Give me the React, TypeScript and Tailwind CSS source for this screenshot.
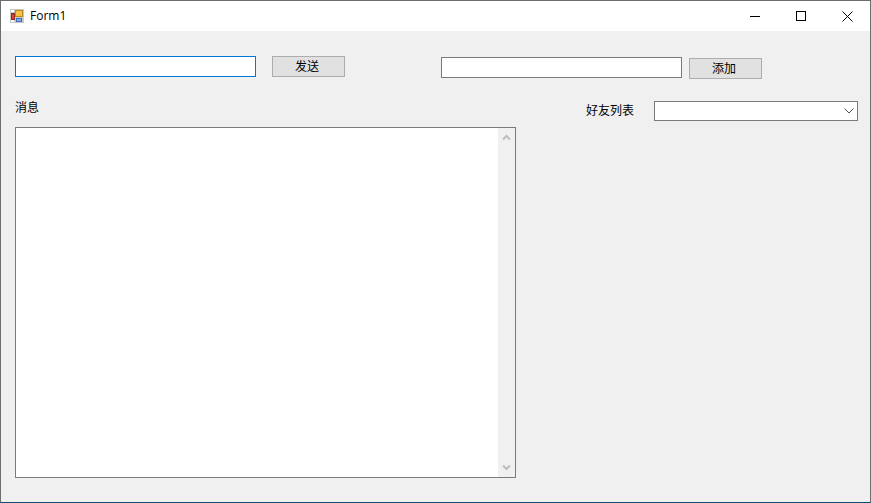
const cjk = "font-['Microsoft_YaHei','Noto_Sans_CJK_SC',sans-serif]";

function AppIcon() {
  return (
    <svg width="14" height="14" viewBox="0 0 14 14" shapeRendering="crispEdges">
      <rect x="0" y="0" width="14" height="14" fill="#c8c8c8" />
      <rect x="1" y="1" width="3" height="2" fill="#fff" />
      <rect x="1" y="11" width="3" height="2" fill="#fff" />
      <rect x="1" y="4" width="4" height="7" fill="#8e2a20" />
      <rect x="2" y="5" width="2" height="5" fill="#d9442f" />
      <rect x="5" y="1" width="8" height="7" fill="#b98a1e" />
      <rect x="6" y="2" width="6" height="5" fill="#f6c244" />
      <rect x="6" y="9" width="6" height="4" fill="#3f70bd" />
      <rect x="7" y="10" width="4" height="2" fill="#7fb0ee" />
    </svg>
  );
}

function TitleBar() {
  return (
    <div className="flex h-[30px] items-center bg-white pl-[9px]">
      <AppIcon />
      <span className="ml-[6px] font-['Open_Sans',sans-serif] text-[12px] text-black">Form1</span>
      <div className="ml-auto flex h-full items-center">
        <div className="flex w-[46px] justify-center">
          <svg width="10" height="10" viewBox="0 0 10 10" shapeRendering="crispEdges">
            <path d="M0 5.5h10" stroke="#000" fill="none" />
          </svg>
        </div>
        <div className="flex w-[46px] justify-center">
          <svg width="10" height="10" viewBox="0 0 10 10" shapeRendering="crispEdges">
            <rect x="0.5" y="0.5" width="9" height="9" stroke="#000" fill="none" />
          </svg>
        </div>
        <div className="flex w-[46px] justify-center">
          <svg width="11" height="11" viewBox="0 0 11 11">
            <path d="M0.5 0.5l10 10M10.5 0.5l-10 10" stroke="#000" strokeWidth="1" fill="none" />
          </svg>
        </div>
      </div>
    </div>
  );
}

function Button({ label }: { label: string }) {
  return (
    <button className={`block h-[21px] w-[73px] border border-[#adadad] bg-[#e1e1e1] pb-[2px] pr-[3px] text-[12px] leading-none text-black ${cjk}`}>
      {label}
    </button>
  );
}

function ScrollArrow({ up }: { up?: boolean }) {
  return (
    <svg width="9" height="7" viewBox="0 0 9 7">
      <path d={up ? "M1 5.5l3.5-3.5 3.5 3.5" : "M1 1.5l3.5 3.5 3.5-3.5"} stroke="#bdbdbd" strokeWidth="2" fill="none" />
    </svg>
  );
}

export default function App() {
  return (
    <div className="flex h-[503px] w-[871px] flex-col overflow-hidden border-x border-t border-x-[#6e6e6e] border-t-[#6e6e6e] border-b border-b-[#0f4c6e] bg-[#f0f0f0]">
      <TitleBar />
      <div className="flex flex-1">
        <div className="w-[515px] pl-[14px]">
          <div className="mt-[25px] flex">
            <div className="h-[21px] w-[241px] border border-[#0078d7] bg-white" />
            <div className="ml-[16px]">
              <Button label="发送" />
            </div>
          </div>
          <div className={`mt-[21px] h-[29px] text-[12px] leading-[18px] text-black ${cjk}`}>消息</div>
          <div className="flex h-[351px] w-[501px] justify-end border border-[#7a7a7a] bg-white">
            <div className="flex w-[17px] flex-col items-center justify-between bg-[#f0f0f0] py-[6px]">
              <ScrollArrow up />
              <ScrollArrow />
            </div>
          </div>
        </div>
        <div className="flex-1">
          <div className="mt-[26px] flex items-start">
            <div className="ml-[-75px] h-[21px] w-[241px] border border-[#7a7a7a] bg-white" />
            <div className="ml-[7px] mt-[1px]">
              <Button label="添加" />
            </div>
          </div>
          <div className="mt-[22px] flex items-center">
            <span className={`ml-[70px] w-[68px] pb-[2px] text-[12px] leading-[18px] text-black ${cjk}`}>好友列表</span>
            <div className="flex h-[20px] w-[204px] items-center justify-end border border-[#7a7a7a] bg-white pr-[3px]">
              <svg width="10" height="6" viewBox="0 0 10 6">
                <path d="M0.5 0.5l4.5 4.5 4.5-4.5" stroke="#505050" strokeWidth="1" fill="none" />
              </svg>
            </div>
          </div>
        </div>
      </div>
    </div>
  );
}
